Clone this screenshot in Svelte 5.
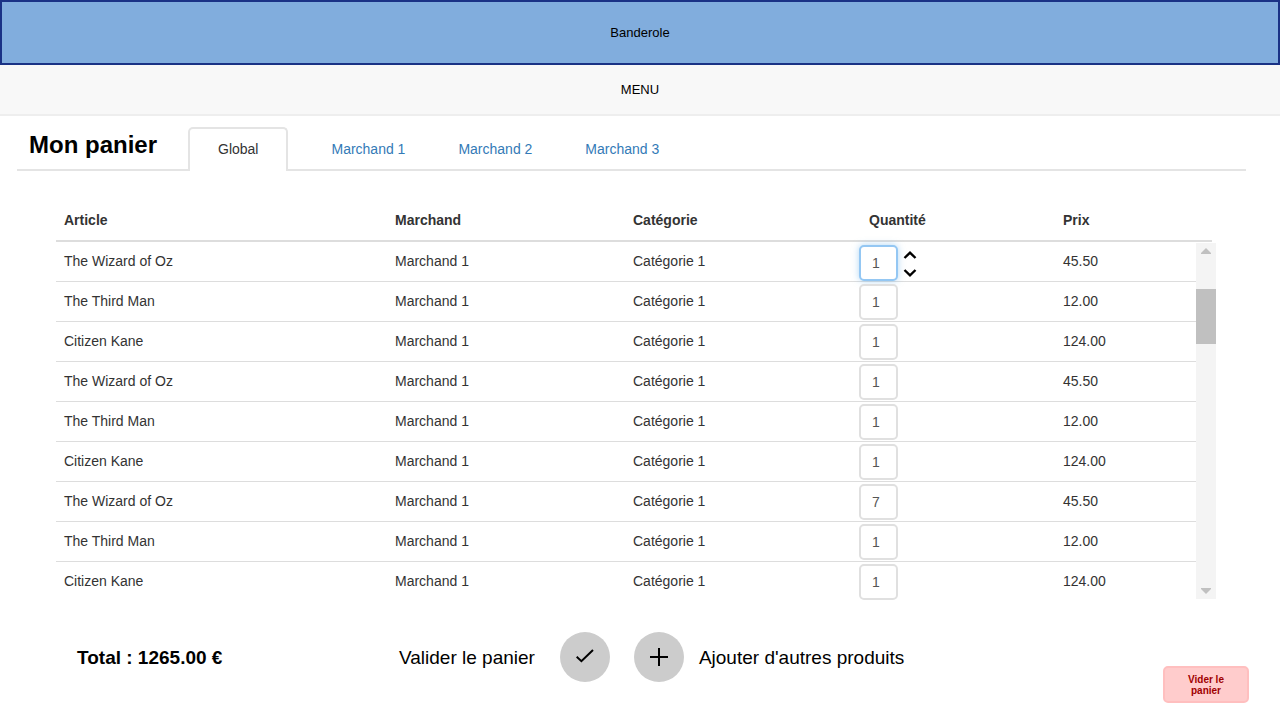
<script>
  const films = [
    { title: 'The Wizard of Oz', price: '45.50' },
    { title: 'The Third Man', price: '12.00' },
    { title: 'Citizen Kane', price: '124.00' }
  ];
  let rows = $state(
    Array.from({ length: 9 }, (_, i) => ({ ...films[i % 3], quantity: i === 6 ? 7 : 1 }))
  );
  let tab = $state(0);
  const tabs = ['Global', 'Marchand 1', 'Marchand 2', 'Marchand 3'];
  const step = (row, by) => (row.quantity = Math.max(0, Number(row.quantity) + by));
</script>

<header class="banner">Banderole</header>
<nav class="menu">MENU</nav>

<main>
  <div class="heading">
    <h1>Mon panier</h1>
    <div class="tabs" role="tablist">
      {#each tabs as name, i}
        <button type="button" role="tab" class="tab" class:active={tab === i} aria-selected={tab === i} onclick={() => (tab = i)}>{name}</button>
      {/each}
    </div>
  </div>

  <section class="cart">
    <table>
      <thead>
        <tr>
          <th scope="col">Article</th>
          <th scope="col">Marchand</th>
          <th scope="col">Catégorie</th>
          <th scope="col" class="qty-head">Quantité</th>
          <th scope="col">Prix</th>
        </tr>
      </thead>
      <tbody>
        {#each rows as row, i}
          <tr>
            <td>{row.title}</td>
            <td>Marchand 1</td>
            <td>Catégorie 1</td>
            <td class="qty">
              <input class:selected={i === 0} type="text" inputmode="numeric" aria-label="Quantité" bind:value={row.quantity} />
              {#if i === 0}
                <div class="steps">
                  <button type="button" aria-label="Augmenter" onclick={() => step(row, 1)}>
                    <svg viewBox="0 0 14 8" width="14" height="8"><path d="M1.5 7 7 1.7 12.5 7" /></svg>
                  </button>
                  <button type="button" aria-label="Diminuer" onclick={() => step(row, -1)}>
                    <svg viewBox="0 0 14 8" width="14" height="8"><path d="M1.5 1 7 6.3 12.5 1" /></svg>
                  </button>
                </div>
              {/if}
            </td>
            <td>{row.price}</td>
          </tr>
        {/each}
      </tbody>
    </table>
    <div class="scrollbar" aria-hidden="true">
      <svg viewBox="0 0 10 6" width="10" height="6"><path d="M5 0 10 5V6H0V5Z" /></svg>
      <div class="track"><div class="thumb"></div></div>
      <svg viewBox="0 0 10 6" width="10" height="6"><path d="M0 0H10V1L5 6 0 1Z" /></svg>
    </div>
  </section>

  <footer>
    <strong class="total">Total : 1265.00 €</strong>
    <div class="actions">
      <span id="validate">Valider le panier</span>
      <button type="button" class="round" aria-labelledby="validate">
        <svg viewBox="0 0 20 20" width="20" height="20"><path d="M1.7 9.8 6.4 14.2 18 3" /></svg>
      </button>
      <button type="button" class="round" aria-labelledby="add">
        <svg viewBox="0 0 20 20" width="20" height="20"><path d="M10 1V19M1 10H19" /></svg>
      </button>
      <span id="add">Ajouter d'autres produits</span>
    </div>
    <button type="button" class="clear">Vider le panier</button>
  </footer>
</main>

<style>
  :global(body) {
    margin: 0;
    background: #fff;
    font-family: "Liberation Sans", Arial, sans-serif;
    font-size: 14px;
    color: #333;
  }
  :global(*) { box-sizing: border-box; }
  button, input { font-family: inherit; }
  button { padding: 0; border: 0; background: none; cursor: pointer; }
  svg { display: block; fill: none; stroke: #000; stroke-width: 2; }

  .banner, .menu {
    display: flex;
    align-items: center;
    justify-content: center;
    font-size: 13px;
    color: #000;
  }
  .banner { height: 65px; background: #81addd; border: 2px solid #1a3285; }
  .menu { height: 51px; background: #f8f8f8; border-bottom: 2px solid #eee; }

  .heading {
    display: flex;
    align-items: flex-end;
    height: 55px;
    margin: 0 34px 0 17px;
    border-bottom: 2px solid #e4e4e4;
  }
  h1 {
    width: 171px;
    margin: 0;
    padding: 0 0 10px 12px;
    font-size: 24px;
    line-height: 28px;
    color: #000;
    white-space: nowrap;
  }
  .tabs { display: flex; margin-bottom: -2px; }
  .tab {
    height: 44px;
    padding: 0 24px 2px;
    border: 2px solid transparent;
    border-bottom: 0;
    border-radius: 5px 5px 0 0;
    font-size: 14px;
    color: #337ab7;
    white-space: nowrap;
  }
  .tab + .tab { margin-left: 1px; }
  .tab:first-child { margin-right: 16px; padding: 0 28px 2px; }
  .tab.active { border-color: #e4e4e4; background: #fff; color: #333; }

  .cart { position: relative; margin: 29px 64px 0 56px; }
  table, thead, tbody { display: block; }
  thead { margin-right: 4px; border-bottom: 2px solid #ddd; }
  tbody { margin-right: 20px; }
  tr { display: grid; grid-template-columns: 331fr 238fr 227fr 203fr 141fr; }
  thead tr { height: 40px; padding-right: 16px; }
  tbody tr { height: 40px; border-bottom: 1px solid #ddd; }
  tbody tr:last-child { height: 38px; border-bottom: 0; }
  th, td { padding: 0 8px; line-height: 40px; text-align: left; white-space: nowrap; }
  td { line-height: 38px; }
  .qty-head { padding-left: 17px; }
  .qty { display: flex; align-items: flex-start; gap: 5px; padding: 2px 0 0 7px; }
  .qty input {
    width: 39px;
    height: 36px;
    padding: 0 11px;
    border: 2px solid #e0e0e0;
    border-radius: 5px;
    background: #fff;
    font-size: 14px;
    color: #555;
    outline: 0;
  }
  .qty input.selected {
    margin-top: 1px;
    border-color: #94c7f3;
    box-shadow: 0 0 7px rgba(102, 175, 233, 0.5);
  }
  .steps { display: grid; gap: 10px; padding-top: 7px; }
  .steps svg { stroke-width: 2.4; }

  .scrollbar {
    position: absolute;
    top: 43px;
    right: 0;
    bottom: 1px;
    width: 20px;
    padding: 5px 0;
    display: flex;
    flex-direction: column;
    align-items: center;
    background: #f4f4f4;
  }
  .scrollbar svg { fill: #c0c0c0; stroke: none; }
  .track { flex: 1; width: 100%; padding-top: 35px; }
  .thumb { height: 55px; background: #c0c0c0; }

  footer {
    display: flex;
    align-items: flex-start;
    margin: 30px 31px 0 77px;
    font-size: 19px;
    color: #000;
    white-space: nowrap;
  }
  .total { flex: 0 0 322px; line-height: 56px; }
  .actions { display: flex; align-items: flex-start; }
  .actions span { line-height: 56px; }
  .round {
    display: grid;
    place-items: center;
    width: 50px;
    height: 50px;
    margin: 2px 0 0 24px;
    border-radius: 50%;
    background: #ccc;
  }
  #validate { margin-right: 1px; }
  #add { margin-left: 15px; }
  .clear {
    width: 86px;
    height: 37px;
    margin: 36px 0 0 auto;
    padding: 0 16px;
    border: 2px solid #ffbfbf;
    border-radius: 5px;
    background: #fcc;
    font-size: 10px;
    font-weight: 700;
    line-height: 11px;
    color: #a00000;
    white-space: normal;
  }
</style>
